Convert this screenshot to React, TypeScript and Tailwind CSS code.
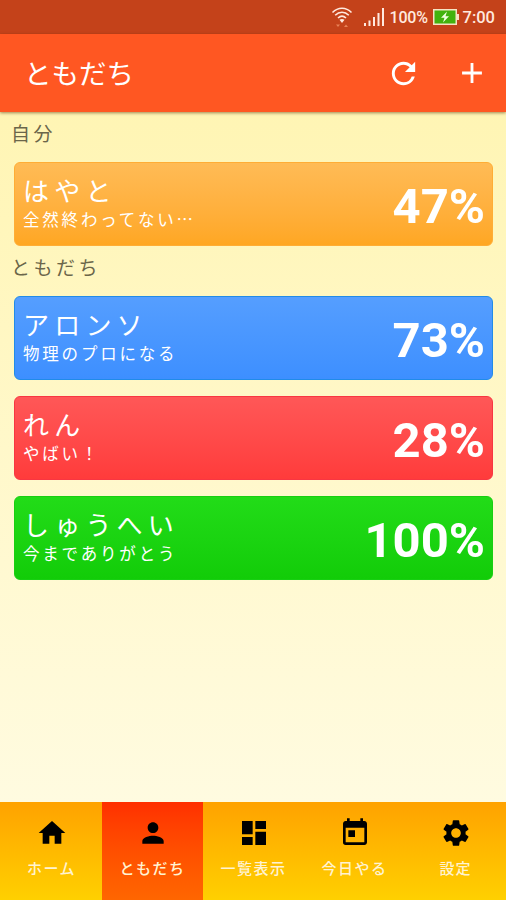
import clsx from "clsx";
import { IconType } from "react-icons";
import {
  MdAdd,
  MdDashboard,
  MdHome,
  MdPerson,
  MdRefresh,
  MdSettings,
  MdToday,
} from "react-icons/md";

type Friend = {
  name: string;
  message: string;
  percent: number;
  color: string;
};

type Tab = {
  label: string;
  Icon: IconType;
  tracking: string;
};

const me: Friend = {
  name: "はやと",
  message: "全然終わってない…",
  percent: 47,
  color: "from-[#ffbb55] to-[#ffa722] border-[#ffad35]",
};

const friends: Friend[] = [
  {
    name: "アロンソ",
    message: "物理のプロになる",
    percent: 73,
    color: "from-[#559eff] to-[#3d8fff] border-[#218be8]",
  },
  {
    name: "れん",
    message: "やばい！",
    percent: 28,
    color: "from-[#ff5757] to-[#ff3b3b] border-[#f83642]",
  },
  {
    name: "しゅうへい",
    message: "今までありがとう",
    percent: 100,
    color: "from-[#22dc18] to-[#12cc08] border-[#18cf12]",
  },
];

const tabs: Tab[] = [
  { label: "ホーム", Icon: MdHome, tracking: "tracking-[1.5px]" },
  { label: "ともだち", Icon: MdPerson, tracking: "tracking-[1.5px]" },
  { label: "一覧表示", Icon: MdDashboard, tracking: "tracking-[1.5px]" },
  { label: "今日やる", Icon: MdToday, tracking: "tracking-[1.5px]" },
  { label: "設定", Icon: MdSettings, tracking: "tracking-[1px]" },
];

function StatusBar() {
  return (
    <div className="flex h-[34px] shrink-0 items-center justify-end bg-[#c4421a] pr-[11px] text-[#ffe9df]">
      <svg className="mr-[11px] h-[22px] w-[22px]" viewBox="0 0 22 22" fill="none" stroke="currentColor" strokeWidth="1.6">
        <path d="M1.5 6.5C7 .8 15 .8 20.5 6.5M4.2 9.3c4-4 9.600-4 13.600 0M7 12c2.400-2.200 5.600-2.200 8 0" />
        <path d="M8.500 13.800c1.500-1.200 3.500-1.200 5 0L11 17z" fill="currentColor" stroke="none" />
        <path d="M5 18.500h4l-2 2.500zM13 21h4l-2-2.500z" fill="#e98257" stroke="none" />
      </svg>
      <svg className="mr-[5px] h-[18px] w-[21px]" viewBox="0 0 21 18" fill="currentColor">
        <path d="M0 15h2v3H0zM4.500 12.500h2V18h-2zM9 9h2v9H9zM13.500 5h2v13h-2zM18 0h2v18h-2z" />
      </svg>
      <span className="w-[40px] pt-[2px] text-[16px] leading-none font-medium tracking-[-0.2px]">100%</span>
      <svg className="mr-[4px] ml-[3px] h-[16px] w-[26px]" viewBox="0 0 26 16">
        <path d="M.75.75h22.500v14.500H.75z" fill="#42b30d" stroke="#f5e4c4" strokeWidth="1.500" />
        <path d="M24 5h2v6h-2z" fill="#f5e4c4" />
        <path d="M14 2.500 8 8.800h3.500L10 13.500l6-6.300h-3.500z" fill="#f2ffe0" />
      </svg>
      <span className="pt-[2px] text-[16.500px] leading-none font-medium">7:00</span>
    </div>
  );
}

function Header() {
  return (
    <header className="z-10 flex h-[78px] shrink-0 items-center bg-[#ff5722] pr-[17px] pl-[24px] text-white shadow-[0_1px_3px_rgba(80,40,0,0.55)]">
      <h1 className="flex-1 pt-[4px] text-[27.500px] leading-none">ともだち</h1>
      <button className="mr-[34px]" aria-label="更新">
        <MdRefresh className="size-[35px]" />
      </button>
      <button aria-label="追加">
        <MdAdd className="size-[34px]" />
      </button>
    </header>
  );
}

function SectionLabel({ text }: { text: string }) {
  return (
    <h2 className="flex h-[34px] items-center pt-[2px] pl-[11px] text-[19px] leading-none tracking-[3.500px] text-[#6b664a]">
      {text}
    </h2>
  );
}

function FriendCard({ friend }: { friend: Friend }) {
  return (
    <div
      className={clsx(
        "mr-[13px] ml-[14px] flex h-[84px] items-center justify-between rounded-[6px] border bg-linear-to-b pr-[7px] pl-[8px] text-white",
        friend.color
      )}
    >
      <div>
        <p className="text-[26px] leading-[30px] tracking-[5.200px]">{friend.name}</p>
        <p className="font-['Noto_Sans_CJK_JP',sans-serif] text-[16.500px] leading-[24px] tracking-[2.800px]">
          {friend.message}
        </p>
      </div>
      <p className="pt-[5px] text-[49px] leading-none font-bold">{friend.percent}%</p>
    </div>
  );
}

function TabBar() {
  return (
    <nav className="flex h-[98px] shrink-0 bg-linear-to-b from-[#ffa200] to-[#ffd000] pl-px">
      {tabs.map(({ label, Icon, tracking }) => (
        <button
          key={label}
          className={clsx(
            "flex flex-1 flex-col items-center pt-[15px]",
            label === "ともだち" && "bg-linear-to-b from-[#ff2f00] to-[#ff6600]"
          )}
        >
          <Icon className="size-[32px] text-black" />
          <span className={clsx("mt-[12px] text-[15px] leading-[16px] font-medium whitespace-nowrap text-[#fff3d2]", tracking)}>
            {label}
          </span>
        </button>
      ))}
    </nav>
  );
}

export default function App() {
  return (
    <div className="flex h-screen flex-col bg-[#fff9c9] font-[Roboto,'Noto_Sans_CJK_JP',sans-serif]">
      <StatusBar />
      <Header />
      <main className="flex-1 bg-linear-to-b from-[#fff5b4] to-[#fffbe0] pt-[4px]">
        <SectionLabel text="自分" />
        <div className="pt-[12px]">
          <FriendCard friend={me} />
        </div>
        <div className="pt-[4px]">
          <SectionLabel text="ともだち" />
        </div>
        <div className="flex flex-col gap-4 pt-[12px]">
          {friends.map((friend) => (
            <FriendCard key={friend.name} friend={friend} />
          ))}
        </div>
      </main>
      <TabBar />
    </div>
  );
}
